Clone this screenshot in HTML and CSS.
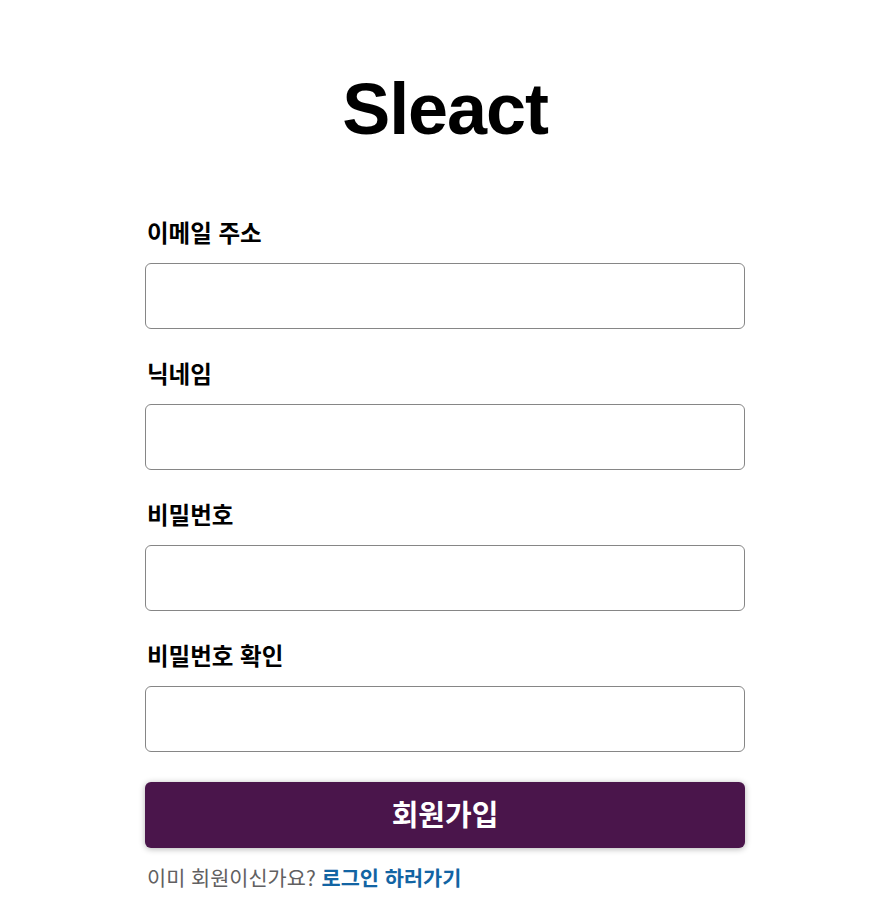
FILE: index.html
```html
<!DOCTYPE html>
<html lang="ko">
<head>
<meta charset="utf-8">
<title>Sleact</title>
<link rel="stylesheet" href="styles.css">
</head>
<body>
<div class="page">
  <header class="header">Sleact</header>
  <form class="form">
    <label class="field"><span class="label-text">이메일 주소</span><input class="input" type="email"></label>
    <label class="field"><span class="label-text">닉네임</span><input class="input" type="text"></label>
    <label class="field"><span class="label-text">비밀번호</span><input class="input" type="password"></label>
    <label class="field"><span class="label-text">비밀번호 확인</span><input class="input" type="password"></label>
    <button class="button" type="button">회원가입</button>
  </form>
  <p class="link-container">이미 회원이신가요?&nbsp;<a href="#" class="link">로그인 하러가기</a></p>
</div>
</body>
</html>
```
FILE: styles.css
```css
html, body {
  margin: 0;
  padding: 0;
  background: #fff;
}
body {
  font-family: "Noto Sans CJK KR", "Noto Sans", sans-serif;
  color: #000;
}
.page {
  width: 890px;
  padding-top: 75px;
}
.header {
  text-align: center;
  font-family: "Liberation Sans", Arial, sans-serif;
  font-weight: 700;
  font-size: 72px;
  line-height: 69px;
  letter-spacing: -1.1px;
  margin: 0 0 74px;
}
.form {
  margin: 0 auto;
  width: 600px;
}
.field {
  display: block;
}
.label-text {
  display: block;
  padding-bottom: 17px;
  padding-left: 2px;
  font-size: 23.5px;
  line-height: 28px;
  font-weight: 700;
}
.input {
  display: block;
  box-sizing: border-box;
  width: 100%;
  height: 66px;
  margin: 0 0 30px;
  border: 1px solid #868686;
  border-radius: 6px;
  padding: 18px;
  font-size: 27px;
  background: #fff;
}
.button {
  display: block;
  width: 100%;
  height: 66px;
  margin: 0 0 14px;
  padding: 0 24px 4px;
  border: none;
  border-radius: 6px;
  background: #4a154b;
  color: #fff;
  font-family: "Noto Sans CJK KR", sans-serif;
  font-size: 29px;
  font-weight: 700;
  box-shadow: 0 1px 6px rgba(0, 0, 0, 0.3);
}
.link-container {
  width: 600px;
  margin: 0 auto;
  padding-left: 2px;
  box-sizing: border-box;
  font-size: 20.8px;
  line-height: 30px;
  color: #616061;
}
.link {
  color: #1264a3;
  font-weight: 700;
  text-decoration: none;
}
```
